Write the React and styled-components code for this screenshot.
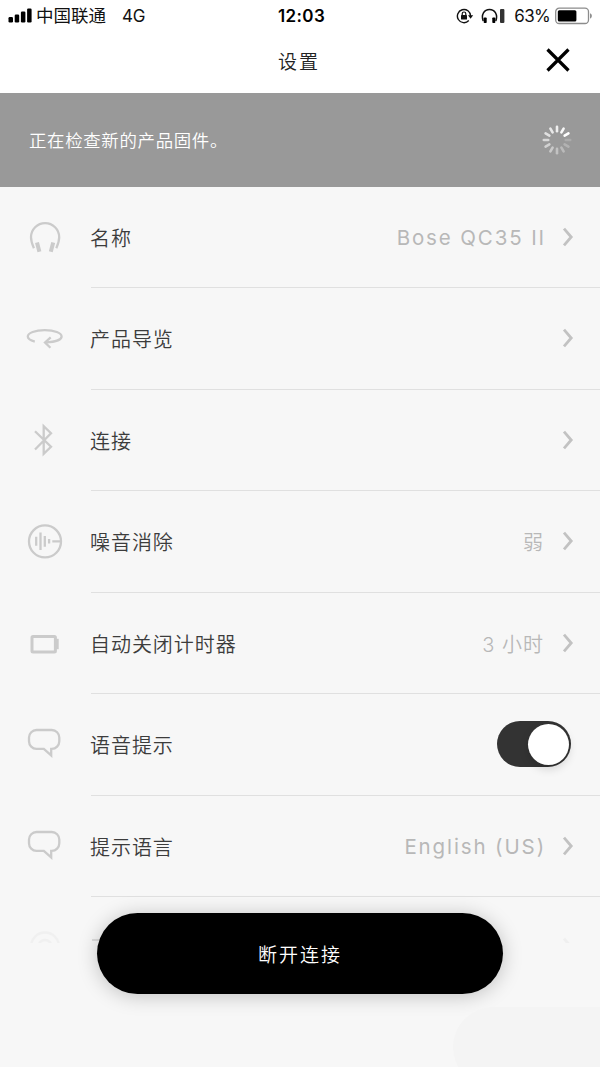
import React from "react";
import styled, { createGlobalStyle } from "styled-components";

const GlobalStyle = createGlobalStyle`
  * {
    box-sizing: border-box;
  }

  body {
    margin: 0;
    background: #f7f7f7;
    font-family: Inter, "Noto Sans CJK SC", sans-serif;
  }
`;

const HeadphonesIcon = () => (
  <IconSvg viewBox="0 0 40 40">
    <path d="M8.9 31.2C7.4 27.5 6 24.4 6 20.2a14.1 14.1 0 0 1 28.2 0c0 4.2-1.4 7.3-2.9 11" />
    <path d="M12 25.4l2.4 9.4M28.2 25.4l-2.4 9.4" strokeWidth="4" />
  </IconSvg>
);

const TourIcon = () => (
  <IconSvg viewBox="0 0 40 40">
    <path d="M9.8 23.6C5 22.3 2.8 20.5 2.8 18.5c0-3.5 7.2-6.3 17-6.3s16.8 2.8 16.8 6.3c0 3-5.6 5.5-16.1 6" />
    <path d="M25.7 19.3L20 24.5l5.4 5.3" />
  </IconSvg>
);

const BluetoothIcon = () => (
  <IconSvg viewBox="0 0 40 40">
    <path d="M10 11.2l16 15.6-7.3 7V6.2l7.3 7.1L10 29.5" />
  </IconSvg>
);

const NoiseIcon = () => (
  <IconSvg viewBox="0 0 40 40">
    <circle cx="20" cy="20.4" r="16" />
    <path d="M11.2 15.8v9M15.5 11.6v17.4M19.8 15v10.8M24.1 18v4.6M27.3 20.4H36" />
  </IconSvg>
);

const TimerIcon = () => (
  <IconSvg viewBox="0 0 40 40">
    <rect x="7" y="13.4" width="23.4" height="15.6" rx="1" strokeWidth="3" />
    <path d="M32.4 15.8v10.4" strokeWidth="2.6" />
  </IconSvg>
);

const ChatIcon = () => (
  <IconSvg viewBox="0 0 40 40">
    <path d="M11.5 6h15.3a7.5 7.5 0 0 1 7.5 7.5v3.8a7.5 7.5 0 0 1-7.5 7.5h-.6v6.6l-7.4-6.6h-7.3A7.5 7.5 0 0 1 4 17.3v-3.8A7.5 7.5 0 0 1 11.5 6z" />
  </IconSvg>
);

const RingIcon = () => (
  <IconSvg viewBox="0 0 40 40">
    <circle cx="20" cy="19.5" r="14" />
    <circle cx="20" cy="19.5" r="6.5" />
  </IconSvg>
);

const Chevron = () => (
  <ChevronSvg viewBox="0 0 12 20">
    <path d="M2 1.7l7.2 8.3L2 18.3" />
  </ChevronSvg>
);

const Spinner = () => (
  <SpinnerSvg viewBox="-15 -15 30 30">
    {Array.from({ length: 12 }, (_, i) => (
      <line
        key={i}
        x1="0"
        y1="-8.8"
        x2="0"
        y2="-13.2"
        opacity={1 - ((14 - i) % 12) * 0.075}
        transform={`rotate(${i * 30})`}
      />
    ))}
  </SpinnerSvg>
);

const rows = [
  { icon: HeadphonesIcon, label: "名称", value: "Bose QC35 II" },
  { icon: TourIcon, label: "产品导览" },
  { icon: BluetoothIcon, label: "连接" },
  { icon: NoiseIcon, label: "噪音消除", value: "弱", cjk: true },
  { icon: TimerIcon, label: "自动关闭计时器", value: "3 小时", cjk: true },
  { icon: ChatIcon, label: "语音提示", toggle: true },
  { icon: ChatIcon, label: "提示语言", value: "English (US)" },
];

const App = () => {
  return (
    <Screen>
      <GlobalStyle />
      <StatusBar>
        <StatusSide>
          <svg width="24" height="16" viewBox="0 0 24 16">
            <rect x="0.5" y="9" width="4.5" height="5.5" rx="1.2" />
            <rect x="6.7" y="6.5" width="4.5" height="8" rx="1.2" />
            <rect x="12.9" y="3.5" width="4.5" height="11" rx="1.2" />
            <rect x="19.1" y="0.5" width="4.5" height="14" rx="1.2" />
          </svg>
          <Carrier>中国联通</Carrier>
          <Network>4G</Network>
        </StatusSide>
        <Time>12:03</Time>
        <StatusSide $end>
          <LockSvg viewBox="0 0 18 16">
            <path d="M12.8 12.6A6.6 6.6 0 1 1 14.6 8" strokeWidth="1.4" />
            <path d="M12 7.2h5.2l-2.6 3.5z" fill="#111" stroke="none" />
            <rect x="5" y="7" width="6" height="4.5" rx="0.5" fill="#111" stroke="none" />
            <path d="M6.2 7V5.8a1.8 1.8 0 0 1 3.6 0V7" strokeWidth="1.2" />
          </LockSvg>
          <HeadsetSvg viewBox="0 0 24 16">
            <path
              d="M2.2 13C-.2 6.5 3.2 1.4 8.5 1.4s8.7 5.1 6.3 11.6"
              fill="none"
              stroke="#111"
              strokeWidth="1.5"
            />
            <rect x="2.7" y="9.5" width="3" height="5.5" rx="0.8" />
            <rect x="11.3" y="9.5" width="3" height="5.5" rx="0.8" />
            <rect x="19" y="1" width="4.4" height="14" rx="1" fill="#333" />
          </HeadsetSvg>
          <Percent>63%</Percent>
          <svg width="38" height="18" viewBox="0 0 38 18">
            <rect
              x="0.7"
              y="1.2"
              width="32.8"
              height="15.3"
              rx="3.5"
              fill="none"
              stroke="#8c8c8c"
              strokeWidth="1.3"
            />
            <rect x="2.8" y="3.3" width="18.6" height="11.1" rx="1.5" />
            <path d="M35.2 6.2c2 .8 2 4.6 0 5.4z" fill="#777" />
          </svg>
        </StatusSide>
      </StatusBar>

      <Header>
        <Title>设置</Title>
        <CloseButton aria-label="关闭">
          <svg width="24" height="24" viewBox="0 0 24 24">
            <path
              d="M1.5 1.5l21 21M22.5 1.5l-21 21"
              stroke="#000"
              strokeWidth="3.2"
            />
          </svg>
        </CloseButton>
      </Header>

      <Banner>
        <BannerText>正在检查新的产品固件。</BannerText>
        <Spinner />
      </Banner>

      <List>
        {rows.map(({ icon: Icon, label, value, cjk, toggle }) => (
          <Row key={label}>
            <IconCell>
              <Icon />
            </IconCell>
            <RowBody $wide={toggle}>
              <Label>{label}</Label>
              {value && <Value $cjk={cjk}>{value}</Value>}
              {toggle ? (
                <Toggle>
                  <Knob />
                </Toggle>
              ) : (
                <Chevron />
              )}
            </RowBody>
          </Row>
        ))}
        <Row $faded>
          <IconCell>
            <RingIcon />
          </IconCell>
          <RowBody>
            <LabelEdge />
            <Chevron />
          </RowBody>
        </Row>
      </List>

      <DisconnectButton>断开连接</DisconnectButton>
      <Corner />
    </Screen>
  );
};

const Screen = styled.main`
  position: relative;
  width: 600px;
  height: 1067px;
  overflow: hidden;
  display: flex;
  flex-direction: column;
  background: #f7f7f7;
`;

const StatusBar = styled.div`
  display: grid;
  grid-template-columns: 1fr auto 1fr;
  align-items: center;
  height: 30px;
  padding: 0 7px 0 8px;
  background: #fff;
  color: #111;
`;

const StatusSide = styled.div`
  display: flex;
  align-items: center;
  justify-content: ${({ $end }) => ($end ? "flex-end" : "flex-start")};
  line-height: 30px;
`;

const Carrier = styled.span`
  margin-left: 4px;
  padding-top: 1px;
  font-size: 17.5px;
`;

const Network = styled.span`
  margin-left: 16px;
  font-size: 17px;
  letter-spacing: -0.2px;
`;

const Time = styled.span`
  padding-left: 2px;
  font-size: 17px;
  font-weight: 600;
  letter-spacing: 0.4px;
  color: #000;
`;

const LockSvg = styled.svg`
  width: 18px;
  height: 16px;
  fill: none;
  stroke: #111;
`;

const HeadsetSvg = styled.svg`
  width: 24px;
  height: 16px;
  margin-left: 7px;
`;

const Percent = styled.span`
  margin: 0 5px 0 9px;
  font-size: 17px;
  letter-spacing: -0.7px;
`;

const Header = styled.header`
  display: grid;
  grid-template-columns: 60px 1fr 60px;
  align-items: center;
  height: 63px;
  background: #fff;
`;

const Title = styled.h1`
  grid-column: 2;
  margin: 0;
  padding: 0 2px 2px 0;
  text-align: center;
  font-size: 19px;
  font-weight: 350;
  letter-spacing: 2px;
  color: #222;
`;

const CloseButton = styled.button`
  display: flex;
  align-items: center;
  margin: 0 0 4px 6px;
  padding: 0;
  border: 0;
  background: none;
`;

const Banner = styled.section`
  display: flex;
  align-items: center;
  justify-content: space-between;
  height: 93.5px;
  padding: 0 28px 0 29px;
  background: #999;
`;

const BannerText = styled.p`
  margin: 0;
  font-size: 17.4px;
  font-weight: 350;
  letter-spacing: 0.7px;
  color: #fff;
`;

const SpinnerSvg = styled.svg`
  width: 30px;
  height: 30px;
  stroke: #fff;
  stroke-width: 2.6;
  stroke-linecap: round;
`;

const List = styled.div`
  height: 756px;
  overflow: hidden;
`;

const Row = styled.div`
  display: flex;
  height: 101.5px;
  opacity: ${({ $faded }) => ($faded ? 0.14 : 1)};
`;

const IconCell = styled.div`
  display: flex;
  align-items: center;
  width: 91px;
  padding: 0 0 1px 25px;
`;

const IconSvg = styled.svg`
  width: 40px;
  height: 40px;
  fill: none;
  stroke: #cbcbcb;
  stroke-width: 2.3;
`;

const RowBody = styled.div`
  flex: 1;
  display: flex;
  align-items: center;
  padding-right: ${({ $wide }) => ($wide ? 29 : 26)}px;
  border-bottom: 1px solid #e0e0e0;
`;

const Label = styled.span`
  flex: 1;
  margin-left: -1px;
  padding-top: 1px;
  font-size: 20px;
  font-weight: 350;
  letter-spacing: 0.95px;
  color: #3c3c3c;
`;

const LabelEdge = styled.span`
  align-self: flex-start;
  width: 14px;
  height: 3px;
  margin: 42px auto 0 1px;
  border-top: 2px solid #404040;
`;

const Value = styled.span`
  margin-right: ${({ $cjk }) => ($cjk ? 18 : 16)}px;
  padding-top: 1px;
  font-size: ${({ $cjk }) => ($cjk ? 20 : 20.5)}px;
  font-weight: ${({ $cjk }) => ($cjk ? 350 : 400)};
  letter-spacing: ${({ $cjk }) => ($cjk ? 1 : 1.88)}px;
  color: #b8b8b8;
`;

const ChevronSvg = styled.svg`
  width: 12px;
  height: 20px;
  fill: none;
  stroke: #c2c2c2;
  stroke-width: 2.8;
`;

const Toggle = styled.div`
  display: flex;
  align-items: center;
  justify-content: flex-end;
  width: 74px;
  height: 46px;
  padding-right: 2px;
  border-radius: 23px;
  background: #333;
`;

const Knob = styled.div`
  width: 41px;
  height: 41px;
  border-radius: 50%;
  background: #fff;
  box-shadow: 0 4px 10px rgba(0, 0, 0, 0.15);
`;

const DisconnectButton = styled.button`
  position: absolute;
  left: 97px;
  bottom: 73px;
  width: 406px;
  height: 81px;
  padding: 0;
  border: 0;
  border-radius: 41px;
  background: #000;
  box-shadow: 0 2px 20px rgba(0, 0, 0, 0.22);
  font-family: inherit;
  font-size: 19px;
  font-weight: 350;
  letter-spacing: 2px;
  color: #fff;
`;

const Corner = styled.div`
  position: absolute;
  right: -60px;
  bottom: -20px;
  width: 207px;
  height: 80px;
  border-radius: 40px;
  background: #f4f4f4;
`;

export default App;
